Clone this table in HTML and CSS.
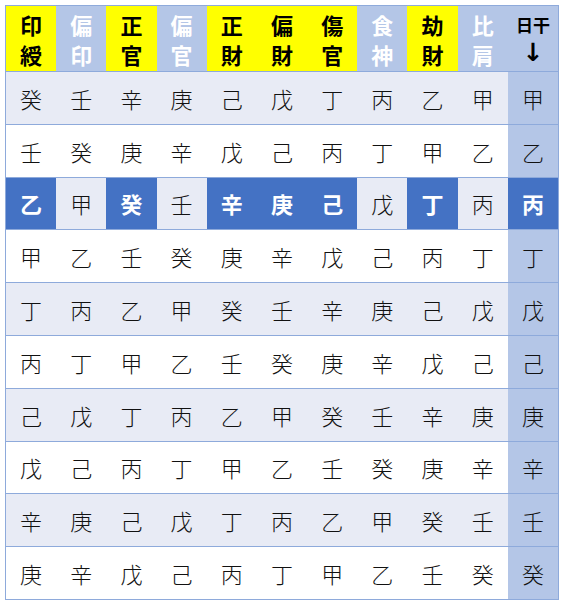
FILE: index.html
```html
<!DOCTYPE html>
<html lang="ja">
<head>
<meta charset="utf-8">
<link rel="stylesheet" href="styles.css">
</head>
<body>
<div class="table">
  <div class="row head">
    <div class="cell y">印<br>綬</div>
    <div class="cell b">偏<br>印</div>
    <div class="cell y">正<br>官</div>
    <div class="cell b">偏<br>官</div>
    <div class="cell y">正<br>財</div>
    <div class="cell y">偏<br>財</div>
    <div class="cell y">傷<br>官</div>
    <div class="cell b">食<br>神</div>
    <div class="cell y">劫<br>財</div>
    <div class="cell b">比<br>肩</div>
    <div class="cell day"><span class="line">日干</span><span class="line arrow">↓</span></div>
  </div>
  <div class="row band"><div class="cell">癸</div><div class="cell">壬</div><div class="cell">辛</div><div class="cell">庚</div><div class="cell">己</div><div class="cell">戊</div><div class="cell">丁</div><div class="cell">丙</div><div class="cell">乙</div><div class="cell">甲</div><div class="cell last">甲</div></div>
  <div class="row"><div class="cell">壬</div><div class="cell">癸</div><div class="cell">庚</div><div class="cell">辛</div><div class="cell">戊</div><div class="cell">己</div><div class="cell">丙</div><div class="cell">丁</div><div class="cell">甲</div><div class="cell">乙</div><div class="cell last">乙</div></div>
  <div class="row hl"><div class="cell on">乙</div><div class="cell off">甲</div><div class="cell on">癸</div><div class="cell off">壬</div><div class="cell on">辛</div><div class="cell on">庚</div><div class="cell on">己</div><div class="cell off">戊</div><div class="cell on">丁</div><div class="cell off">丙</div><div class="cell on">丙</div></div>
  <div class="row"><div class="cell">甲</div><div class="cell">乙</div><div class="cell">壬</div><div class="cell">癸</div><div class="cell">庚</div><div class="cell">辛</div><div class="cell">戊</div><div class="cell">己</div><div class="cell">丙</div><div class="cell">丁</div><div class="cell last">丁</div></div>
  <div class="row band"><div class="cell">丁</div><div class="cell">丙</div><div class="cell">乙</div><div class="cell">甲</div><div class="cell">癸</div><div class="cell">壬</div><div class="cell">辛</div><div class="cell">庚</div><div class="cell">己</div><div class="cell">戊</div><div class="cell last">戊</div></div>
  <div class="row"><div class="cell">丙</div><div class="cell">丁</div><div class="cell">甲</div><div class="cell">乙</div><div class="cell">壬</div><div class="cell">癸</div><div class="cell">庚</div><div class="cell">辛</div><div class="cell">戊</div><div class="cell">己</div><div class="cell last">己</div></div>
  <div class="row band"><div class="cell">己</div><div class="cell">戊</div><div class="cell">丁</div><div class="cell">丙</div><div class="cell">乙</div><div class="cell">甲</div><div class="cell">癸</div><div class="cell">壬</div><div class="cell">辛</div><div class="cell">庚</div><div class="cell last">庚</div></div>
  <div class="row"><div class="cell">戊</div><div class="cell">己</div><div class="cell">丙</div><div class="cell">丁</div><div class="cell">甲</div><div class="cell">乙</div><div class="cell">壬</div><div class="cell">癸</div><div class="cell">庚</div><div class="cell">辛</div><div class="cell last">辛</div></div>
  <div class="row band"><div class="cell">辛</div><div class="cell">庚</div><div class="cell">己</div><div class="cell">戊</div><div class="cell">丁</div><div class="cell">丙</div><div class="cell">乙</div><div class="cell">甲</div><div class="cell">癸</div><div class="cell">壬</div><div class="cell last">壬</div></div>
  <div class="row"><div class="cell">庚</div><div class="cell">辛</div><div class="cell">戊</div><div class="cell">己</div><div class="cell">丙</div><div class="cell">丁</div><div class="cell">甲</div><div class="cell">乙</div><div class="cell">壬</div><div class="cell">癸</div><div class="cell last">癸</div></div>
</div>
</body>
</html>
```

FILE: styles.css
```css
html, body {
  margin: 0;
  padding: 0;
  background: #ffffff;
}
body {
  padding: 5px;
  font-family: "Noto Sans CJK JP", "Noto Sans", sans-serif;
}
.table {
  width: 554px;
  border: 1px solid #8eaadb;
  box-sizing: border-box;
}
.row {
  display: grid;
  grid-template-columns: repeat(11, 1fr);
  height: 52.8px;
  border-bottom: 1px solid #8eaadb;
  box-sizing: border-box;
  background: #ffffff;
}
.row:last-child {
  border-bottom: none;
  height: 51.8px;
}
.row.band {
  background: #e8ebf5;
}
.row.head {
  height: 66px;
}
.cell {
  display: flex;
  align-items: center;
  justify-content: center;
  text-align: center;
  font-size: 22px;
  font-weight: 300;
  color: #111;
}
.cell.last {
  background: #b4c6e7;
}
.head .cell {
  font-weight: 700;
  font-size: 22px;
  line-height: 30px;
}
.head .y {
  background: #ffff00;
  color: #000;
}
.head .b {
  background: #b4c6e7;
  color: #ffffff;
}
.head .day {
  flex-direction: column;
  background: #b4c6e7;
  color: #000;
  font-size: 17px;
  line-height: 28px;
}
.line {
  display: block;
}
.arrow {
  font-family: "DejaVu Sans", sans-serif;
  font-size: 25px;
  font-weight: 700;
  line-height: 28px;
}
.hl .on {
  background: #4472c4;
  color: #ffffff;
  font-weight: 700;
}
.hl .off {
  background: #e8ebf5;
}
```
